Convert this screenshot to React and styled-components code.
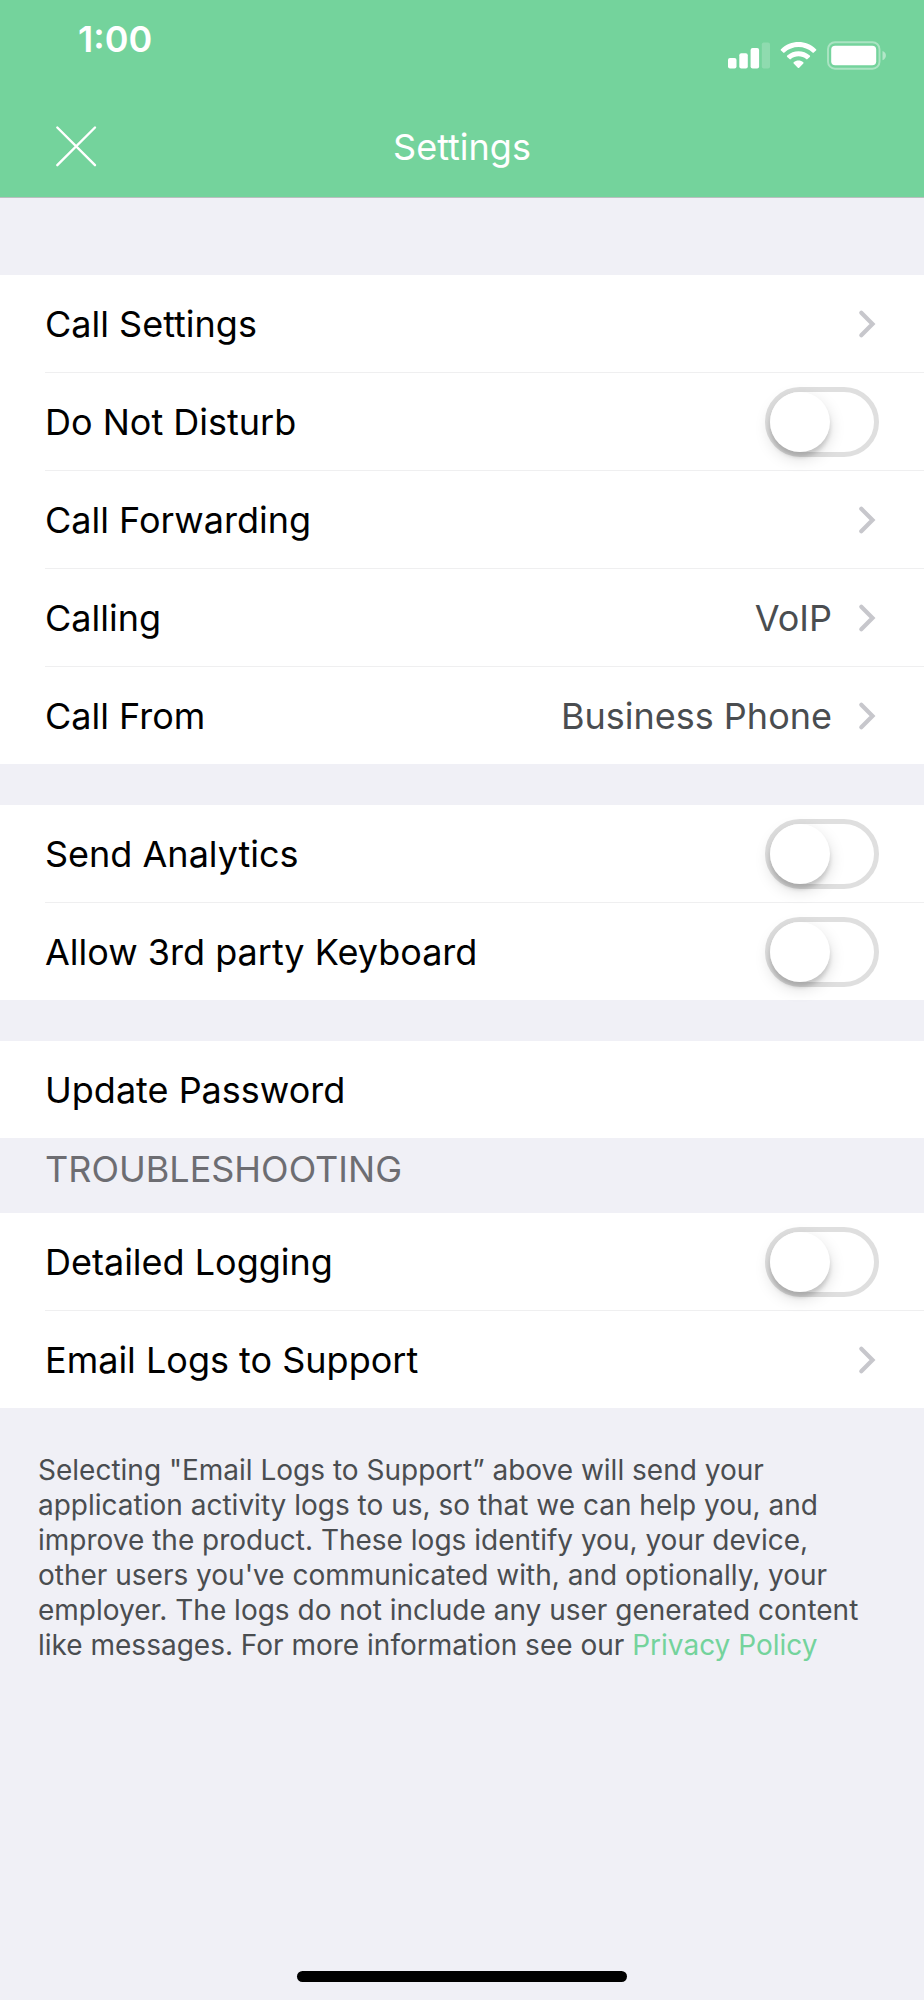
import React, { useState } from "react";
import styled, { createGlobalStyle } from "styled-components";

const GlobalStyle = createGlobalStyle`
  :root {
    --main-color: #74d39c;
    --page-color: #f0f0f6;
    --line-color: #efeff0;
  }
  * {
    box-sizing: border-box;
  }
  body {
    margin: 0;
    background: var(--page-color);
    font-family: Inter, "Liberation Sans", sans-serif;
  }
`;

const PageWrapper = styled.div`
  display: flex;
  flex-direction: column;
  min-height: 100vh;
`;

const Header = styled.header`
  background: var(--main-color);
  border-bottom: 1px solid #b9bfbf;
  color: #ffffff;
`;

const StatusBar = styled.div`
  display: flex;
  align-items: flex-start;
  justify-content: space-between;
  height: 96px;
  padding: 17px 37px 0 78px;
`;

const Time = styled.span`
  font-size: 36px;
  font-weight: 600;
  line-height: 44px;
`;

const StatusIcons = styled.div`
  display: flex;
  gap: 10px;
  padding-top: 24px;
`;

const NavBar = styled.div`
  display: grid;
  grid-template-columns: 1fr auto 1fr;
  align-items: center;
  height: 101px;
  padding: 0 52px;
`;

const CloseBtn = styled.button`
  display: flex;
  justify-self: start;
  padding: 0;
  border: none;
  background: none;
  color: inherit;
  cursor: pointer;
`;

const Title = styled.h1`
  margin: 0;
  font-size: 36px;
  font-weight: 400;
  line-height: 44px;
`;

const Content = styled.main`
  flex: 1;
  padding-top: 77px;
`;

const Group = styled.ul`
  margin: 0;
  padding: 0 0 0 45px;
  list-style: none;
  background: #ffffff;
  & + & {
    margin-top: 41px;
  }
`;

const Item = styled.li`
  &:not(:last-child) {
    border-bottom: 1px solid var(--line-color);
  }
`;

const Row = styled.div`
  display: flex;
  align-items: center;
  width: 100%;
  min-height: 97px;
  padding: 0 45px 0 0;
  border: none;
  background: none;
  color: #000000;
  font-family: inherit;
  font-size: 36px;
  line-height: 44px;
  text-align: left;
`;

const RowLabel = styled.span`
  flex: 1;
`;

const RowValue = styled.span`
  margin-right: 23px;
  color: #4a4d50;
`;

const Switch = styled.input`
  appearance: none;
  display: flex;
  justify-content: ${({ checked }) => (checked ? "flex-end" : "flex-start")};
  width: 114px;
  height: 70px;
  margin: 0;
  border: 5px solid ${({ checked }) => (checked ? "var(--main-color)" : "#dfdfdf")};
  border-radius: 35px;
  background: ${({ checked }) => (checked ? "var(--main-color)" : "#ffffff")};
  cursor: pointer;
  &::before {
    content: "";
    width: 60px;
    height: 60px;
    border-radius: 50%;
    background: #ffffff;
    box-shadow: 0 6px 16px rgba(0, 0, 0, 0.15), 0 5px 4px rgba(0, 0, 0, 0.14);
  }
`;

const SectionTitle = styled.h2`
  height: 75px;
  margin: 0;
  padding: 9px 45px 0;
  color: #6d6d72;
  font-size: 36px;
  font-weight: 400;
  line-height: 44px;
`;

const FooterText = styled.p`
  margin: 0;
  padding: 45px 45px 45px 38px;
  color: #4a4d50;
  font-size: 28px;
  line-height: 35px;
`;

const PolicyLink = styled.a`
  color: var(--main-color);
  text-decoration: none;
`;

const HomeIndicator = styled.div`
  align-self: center;
  width: 330px;
  height: 11px;
  margin-bottom: 18px;
  border-radius: 6px;
  background: #000000;
`;

const SignalIcon = () => (
  <svg width="42" height="29" viewBox="0 0 42 29" fill="currentColor">
    <rect x="0" y="17" width="8.5" height="10.5" rx="2" />
    <rect x="11.3" y="12.3" width="8.5" height="15.2" rx="2" />
    <rect x="22.6" y="7" width="8.5" height="20.5" rx="2" />
    <rect x="33.8" y="1.5" width="8.2" height="26" rx="2" opacity="0.2" />
  </svg>
);

const WifiIcon = () => (
  <svg width="37" height="29" viewBox="0 0 37 29" fill="currentColor">
    <path d="M1 8.2C10.5 -1.3 26.5 -1.3 36 8.2Q36.7 8.9 36 9.6L33.8 11.6Q33.2 12.2 32.5 11.6C24.6 4.2 12.4 4.2 4.5 11.6Q3.8 12.2 3.2 11.6L1 9.6Q.3 8.9 1 8.2Z" />
    <path d="M7.2 14.5C13.5 8.7 23.5 8.7 29.8 14.5Q30.5 15.2 29.8 15.9L27.5 18.1Q26.9 18.7 26.2 18.1C21.8 14.3 15.2 14.3 10.8 18.1Q10.1 18.7 9.5 18.1L7.2 15.9Q6.5 15.2 7.2 14.5Z" />
    <path d="M13.7 21.2C16.4 18.9 20.6 18.9 23.3 21.2Q24 21.9 23.3 22.5L19.2 26.7Q18.5 27.4 17.8 26.7L13.7 22.5Q13 21.9 13.7 21.2Z" />
  </svg>
);

const BatteryIcon = () => (
  <svg width="60" height="29" viewBox="0 0 60 29" fill="currentColor">
    <rect
      x="1"
      y="1.2"
      width="51.5"
      height="26.5"
      rx="7"
      fill="none"
      stroke="currentColor"
      strokeWidth="1.9"
      opacity="0.4"
    />
    <rect x="4.2" y="4.7" width="45" height="19.5" rx="4" />
    <path d="M55.5 10C60 11.5 60 17.5 55.5 19.2Z" opacity="0.45" />
  </svg>
);

const CloseIcon = () => (
  <svg
    width="48"
    height="48"
    viewBox="0 0 48 48"
    stroke="currentColor"
    strokeWidth="2.4"
    strokeLinecap="round"
  >
    <path d="M5.3 4.5L43 42.2M43 4.5L5.3 42.2" />
  </svg>
);

const ChevronIcon = () => (
  <svg
    width="24"
    height="32"
    viewBox="0 0 24 32"
    fill="none"
    stroke="#c7c7cc"
    strokeWidth="4.2"
    strokeLinecap="round"
    strokeLinejoin="miter"
  >
    <path d="M6.3 4.8L17.5 16L6.3 27.2" />
  </svg>
);

const settingGroups = [
  [
    { id: "call_settings", label: "Call Settings", type: "link" },
    { id: "do_not_disturb", label: "Do Not Disturb", type: "switch" },
    { id: "call_forwarding", label: "Call Forwarding", type: "link" },
    { id: "calling", label: "Calling", type: "link", value: "VoIP" },
    { id: "call_from", label: "Call From", type: "link", value: "Business Phone" },
  ],
  [
    { id: "analytics", label: "Send Analytics", type: "switch" },
    { id: "keyboard", label: "Allow 3rd party Keyboard", type: "switch" },
  ],
  [{ id: "password", label: "Update Password", type: "action" }],
];

const troubleshooting = [
  { id: "logging", label: "Detailed Logging", type: "switch" },
  { id: "email_logs", label: "Email Logs to Support", type: "link" },
];

const SettingGroup = ({ items }) => {
  const [enabled, setEnabled] = useState({});
  return (
    <Group>
      {items.map(({ id, label, type, value }) => (
        <Item key={id}>
          {type === "switch" ? (
            <Row as="label" htmlFor={id}>
              <RowLabel>{label}</RowLabel>
              <Switch
                id={id}
                type="checkbox"
                checked={!!enabled[id]}
                onChange={(e) =>
                  setEnabled({ ...enabled, [id]: e.target.checked })
                }
              />
            </Row>
          ) : (
            <Row as="button" type="button">
              <RowLabel>{label}</RowLabel>
              {value && <RowValue>{value}</RowValue>}
              {type === "link" && <ChevronIcon />}
            </Row>
          )}
        </Item>
      ))}
    </Group>
  );
};

const App = () => {
  return (
    <PageWrapper>
      <GlobalStyle />
      <Header>
        <StatusBar>
          <Time>1:00</Time>
          <StatusIcons>
            <SignalIcon />
            <WifiIcon />
            <BatteryIcon />
          </StatusIcons>
        </StatusBar>
        <NavBar>
          <CloseBtn type="button" aria-label="Close">
            <CloseIcon />
          </CloseBtn>
          <Title>Settings</Title>
        </NavBar>
      </Header>
      <Content>
        {settingGroups.map((items) => (
          <SettingGroup items={items} key={items[0].id} />
        ))}
        <SectionTitle>TROUBLESHOOTING</SectionTitle>
        <SettingGroup items={troubleshooting} />
        <FooterText>
          Selecting "Email Logs to Support” above will send your application
          activity logs to us, so that we can help you, and improve the product.
          These logs identify you, your device, other users you've communicated
          with, and optionally, your employer. The logs do not include any user
          generated content like messages. For more information see our{" "}
          <PolicyLink href="#privacy">Privacy Policy</PolicyLink>
        </FooterText>
      </Content>
      <HomeIndicator />
    </PageWrapper>
  );
};

export default App;
